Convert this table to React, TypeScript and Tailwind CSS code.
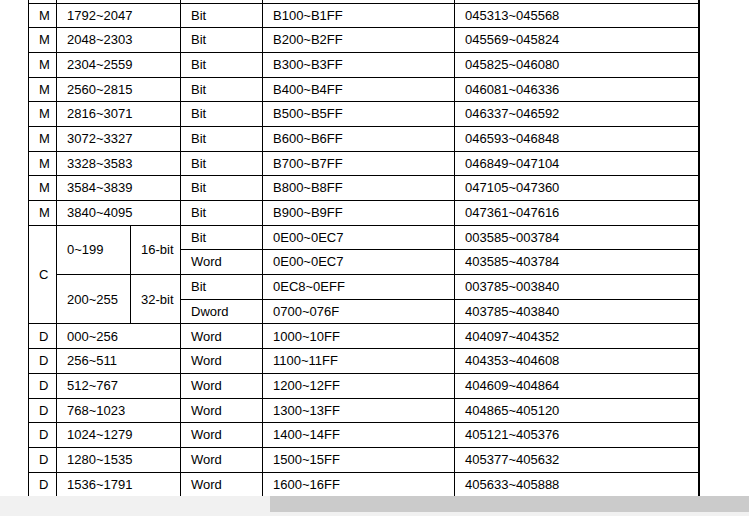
import React from 'react';

interface SimpleRow {
  type: string;
  range: string;
  size: string;
  addr: string;
  modbus: string;
}

const mRows: SimpleRow[] = [
  { type: 'M', range: '1792~2047', size: 'Bit', addr: 'B100~B1FF', modbus: '045313~045568' },
  { type: 'M', range: '2048~2303', size: 'Bit', addr: 'B200~B2FF', modbus: '045569~045824' },
  { type: 'M', range: '2304~2559', size: 'Bit', addr: 'B300~B3FF', modbus: '045825~046080' },
  { type: 'M', range: '2560~2815', size: 'Bit', addr: 'B400~B4FF', modbus: '046081~046336' },
  { type: 'M', range: '2816~3071', size: 'Bit', addr: 'B500~B5FF', modbus: '046337~046592' },
  { type: 'M', range: '3072~3327', size: 'Bit', addr: 'B600~B6FF', modbus: '046593~046848' },
  { type: 'M', range: '3328~3583', size: 'Bit', addr: 'B700~B7FF', modbus: '046849~047104' },
  { type: 'M', range: '3584~3839', size: 'Bit', addr: 'B800~B8FF', modbus: '047105~047360' },
  { type: 'M', range: '3840~4095', size: 'Bit', addr: 'B900~B9FF', modbus: '047361~047616' },
];

const dRows: SimpleRow[] = [
  { type: 'D', range: '000~256', size: 'Word', addr: '1000~10FF', modbus: '404097~404352' },
  { type: 'D', range: '256~511', size: 'Word', addr: '1100~11FF', modbus: '404353~404608' },
  { type: 'D', range: '512~767', size: 'Word', addr: '1200~12FF', modbus: '404609~404864' },
  { type: 'D', range: '768~1023', size: 'Word', addr: '1300~13FF', modbus: '404865~405120' },
  { type: 'D', range: '1024~1279', size: 'Word', addr: '1400~14FF', modbus: '405121~405376' },
  { type: 'D', range: '1280~1535', size: 'Word', addr: '1500~15FF', modbus: '405377~405632' },
  { type: 'D', range: '1536~1791', size: 'Word', addr: '1600~16FF', modbus: '405633~405888' },
];

// celda base: borde negro de 1px, texto a la izquierda
const cell = 'border border-black px-[10px] py-0 align-middle whitespace-nowrap';
const lastCell = 'border border-black border-r-2 px-[10px] py-0 align-middle whitespace-nowrap';

const PlainRow = ({ row }: { row: SimpleRow }) => (
  <tr className="h-[24.7px]">
    <td className={`${cell} px-0 text-center`}>{row.type}</td>
    <td className={cell} colSpan={2}>{row.range}</td>
    <td className={cell}>{row.size}</td>
    <td className={cell}>{row.addr}</td>
    <td className={lastCell}>{row.modbus}</td>
  </tr>
);

const App = () => {
  return (
    <div className="h-[516px] w-full overflow-hidden bg-white flex flex-col font-['Liberation_Sans',Arial,sans-serif] text-[13px] text-black">
      <div className="h-[496px] shrink-0 overflow-hidden pl-[28px]">
        <table className="table-fixed border-collapse w-[670px]">
          <colgroup>
            <col className="w-[28px]" />
            <col className="w-[74px]" />
            <col className="w-[50px]" />
            <col className="w-[82px]" />
            <col className="w-[192px]" />
            <col className="w-[244px]" />
          </colgroup>
          <tbody>
            {/* resto de la fila anterior, cortada por el scroll */}
            <tr className="h-[3px]">
              <td className="border-x border-black p-0" />
              <td className="border-x border-black p-0" colSpan={2} />
              <td className="border-x border-black p-0" />
              <td className="border-x border-black p-0" />
              <td className="border-l border-r-2 border-black p-0" />
            </tr>

            {mRows.map((row) => (
              <PlainRow key={row.range} row={row} />
            ))}

            <tr className="h-[24.7px]">
              <td className={`${cell} px-0 text-center`} rowSpan={4}>C</td>
              <td className={cell} rowSpan={2}>0~199</td>
              <td className={`${cell} px-0 text-center`} rowSpan={2}>16-bit</td>
              <td className={cell}>Bit</td>
              <td className={cell}>0E00~0EC7</td>
              <td className={lastCell}>003585~003784</td>
            </tr>
            <tr className="h-[24.7px]">
              <td className={cell}>Word</td>
              <td className={cell}>0E00~0EC7</td>
              <td className={lastCell}>403585~403784</td>
            </tr>
            <tr className="h-[24.7px]">
              <td className={cell} rowSpan={2}>200~255</td>
              <td className={`${cell} px-0 text-center`} rowSpan={2}>32-bit</td>
              <td className={cell}>Bit</td>
              <td className={cell}>0EC8~0EFF</td>
              <td className={lastCell}>003785~003840</td>
            </tr>
            <tr className="h-[24.7px]">
              <td className={cell}>Dword</td>
              <td className={cell}>0700~076F</td>
              <td className={lastCell}>403785~403840</td>
            </tr>

            {dRows.map((row) => (
              <PlainRow key={row.range} row={row} />
            ))}
          </tbody>
        </table>
      </div>

      {/* barra de scroll horizontal */}
      <div className="flex-1 bg-[#f1f1f1]">
        <div className="ml-[270px] h-[16px] bg-[#cbcbcb]" />
      </div>
    </div>
  );
};

export default App;
